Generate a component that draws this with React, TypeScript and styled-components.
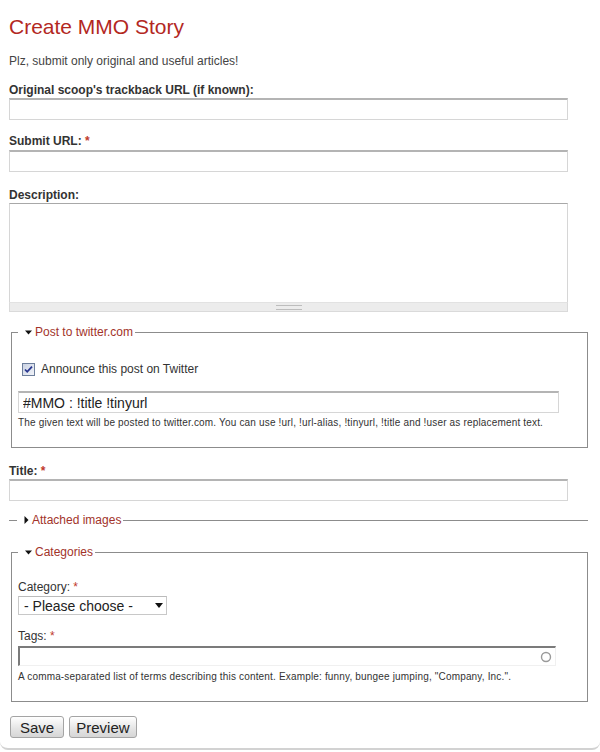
import React from 'react'
import styled, { createGlobalStyle } from 'styled-components'

const GlobalStyle = createGlobalStyle`
  body {
    margin: 0;
    background: #fff;
    font-family: "Liberation Sans", Arial, sans-serif;
    color: #333;
  }
`

const Page = styled.div`
  width: 600px;
  box-sizing: border-box;
  padding: 14px 32px 10px 9px;
  border-bottom: 2px solid #d2d2d2;
  border-radius: 0 0 8px 8px;
`

const Title = styled.h1`
  margin: 0;
  font-size: 21px;
  line-height: 26px;
  font-weight: normal;
  color: #b3281f;
`

const Intro = styled.p`
  margin: 13px 0 0;
  font-size: 12px;
  line-height: 16px;
  color: #444;
`

const FormItem = styled.div<{ $top: number }>`
  margin-top: ${p => p.$top}px;
`

const Label = styled.label<{ $gap?: number; $weight?: string }>`
  display: block;
  font-size: 12px;
  line-height: 16px;
  font-weight: ${p => (p.$weight === 'normal' ? 'normal' : 'bold')};
  color: #333;
  margin-bottom: ${p => p.$gap ?? 0}px;
`

const Required = styled.span`
  color: #c0392b;
`

const TextInput = styled.input<{ $width?: number; $size?: number }>`
  display: block;
  box-sizing: border-box;
  width: ${p => (p.$width ? `${p.$width}px` : '100%')};
  height: 22px;
  margin: 0;
  padding: 0 4px;
  border: 1px solid #d6d6d6;
  border-top: 2px solid #b4b4b4;
  font-family: inherit;
  font-size: ${p => p.$size ?? 12}px;
  color: #222;
  background: #fff;
  outline: none;
`

const TextAreaBox = styled.div`
  display: flex;
  flex-direction: column;
`

const TextArea = styled.textarea`
  display: block;
  box-sizing: border-box;
  width: 100%;
  height: 99px;
  margin: 0;
  border: 1px solid #d6d6d6;
  border-top: 1px solid #a8a8a8;
  border-bottom: none;
  resize: none;
  font-family: inherit;
  outline: none;
`

const Grippie = styled.div`
  height: 10px;
  box-sizing: border-box;
  background: #ececec;
  border: 1px solid #dadada;
  border-top-color: #e2e2e2;
  display: flex;
  align-items: center;
  justify-content: center;
`

const GrippieHandle = styled.span`
  width: 26px;
  height: 3px;
  border-top: 1px solid #bdbdbd;
  border-bottom: 1px solid #bdbdbd;
`

const Fieldset = styled.fieldset<{ $top: number; $collapsed?: boolean }>`
  margin: ${p => p.$top}px 0 0 2px;
  width: 577px;
  box-sizing: border-box;
  padding: 0 6px ${p => (p.$collapsed ? 0 : 18)}px;
  border: 1px solid #8c8c8c;
  ${p =>
    p.$collapsed &&
    `
    border-left: none;
    border-right: none;
    border-bottom: none;
    width: 579px;
    margin-left: 0;
    padding-left: 8px;
  `}
`

const Legend = styled.legend`
  padding: 0 2px 0 0;
  font-size: 12px;
  line-height: 16px;
  color: #a2332a;
`

const LegendInner = styled.span`
  display: flex;
  align-items: center;
  gap: 3px;
  padding-left: 7px;
`

const CheckRow = styled.label`
  display: flex;
  align-items: center;
  gap: 6px;
  margin-top: 21px;
  margin-left: 4px;
  font-size: 12px;
  line-height: 16px;
  color: #333;
`

const Help = styled.div<{ $top: number }>`
  margin-top: ${p => p.$top}px;
  font-size: 10px;
  line-height: 13px;
  color: #333;
  letter-spacing: 0.17px;
`

const SelectBox = styled.div`
  display: flex;
  align-items: center;
  width: 149px;
  height: 19px;
  box-sizing: border-box;
  border: 1px solid #c8c8c8;
  border-top-color: #bbb;
  background: #fff;
`

const Select = styled.select`
  flex: 1;
  min-width: 0;
  height: 100%;
  appearance: none;
  border: none;
  background: transparent;
  padding: 0 0 0 5px;
  font-family: inherit;
  font-size: 14px;
  color: #222;
  outline: none;
`

const TagsField = styled.div`
  display: flex;
  align-items: center;
  width: 538px;
  height: 20px;
  box-sizing: border-box;
  border-top: 2px solid #7b7b7b;
  border-left: 2px solid #7b7b7b;
  border-right: 1px solid #f0f0f0;
  border-bottom: 1px solid #f0f0f0;
`

const TagsInput = styled.input`
  flex: 1;
  min-width: 0;
  border: none;
  height: 100%;
  padding: 0 4px;
  font-family: inherit;
  outline: none;
  background: transparent;
`

const ButtonRow = styled.div`
  display: flex;
  gap: 5px;
  margin-top: 14px;
  margin-left: 1px;
`

const Button = styled.button<{ $pad: number }>`
  height: 22px;
  padding: 0 ${p => p.$pad}px;
  font-family: inherit;
  font-size: 15px;
  color: #222;
  border: 1px solid #a4a4a4;
  border-radius: 3px;
  background: linear-gradient(#ffffff, #e4e4e4 60%, #d6d6d6);
  cursor: pointer;
`

const TriangleDown = () => (
  <svg width="7" height="5" viewBox="0 0 7 5">
    <path d="M0 0.5 H7 L3.5 4.5 Z" fill="#111" />
  </svg>
)

const TriangleRight = () => (
  <svg width="5" height="8" viewBox="0 0 5 8">
    <path d="M0.5 0 V8 L4.5 4 Z" fill="#111" />
  </svg>
)

const CheckBox = () => (
  <svg width="13" height="13" viewBox="0 0 13 13">
    <defs>
      <linearGradient id="cb" x1="0" y1="0" x2="1" y2="1">
        <stop offset="0" stopColor="#c9d1e2" />
        <stop offset="1" stopColor="#f2f4f9" />
      </linearGradient>
    </defs>
    <rect x="0.5" y="0.5" width="12" height="12" fill="url(#cb)" stroke="#6d7f9c" />
    <path d="M3 6.5 L5.2 8.8 L10 3.6" fill="none" stroke="#28368f" strokeWidth="1.8" />
  </svg>
)

const SelectArrow = () => (
  <svg width="8" height="5" viewBox="0 0 8 5" style={{ marginRight: 3 }}>
    <path d="M0 0 H8 L4 5 Z" fill="#111" />
  </svg>
)

const Throbber = () => (
  <svg width="12" height="12" viewBox="0 0 12 12" style={{ marginRight: 3 }}>
    <circle cx="6" cy="6" r="4.5" fill="none" stroke="#9a9a9a" strokeWidth="1.4" />
  </svg>
)

const App: React.FC = () => {
  return (
    <Page>
      <GlobalStyle />
      <Title>Create MMO Story</Title>
      <Intro>Plz, submit only original and useful articles!</Intro>

      <FormItem $top={13}>
        <Label>Original scoop's trackback URL (if known):</Label>
        <TextInput type="text" />
      </FormItem>

      <FormItem $top={13}>
        <Label $gap={1}>
          Submit URL: <Required>*</Required>
        </Label>
        <TextInput type="text" />
      </FormItem>

      <FormItem $top={15}>
        <Label>Description:</Label>
        <TextAreaBox>
          <TextArea />
          <Grippie>
            <GrippieHandle />
          </Grippie>
        </TextAreaBox>
      </FormItem>

      <Fieldset $top={12}>
        <Legend>
          <LegendInner>
            <TriangleDown />
            Post to twitter.com
          </LegendInner>
        </Legend>
        <CheckRow>
          <CheckBox />
          Announce this post on Twitter
        </CheckRow>
        <FormItem $top={14}>
          <TextInput type="text" $width={541} $size={14} defaultValue="#MMO : !title !tinyurl" />
          <Help $top={3}>
            The given text will be posted to twitter.com. You can use !url, !url-alias, !tinyurl, !title and !user as replacement text.
          </Help>
        </FormItem>
      </Fieldset>

      <FormItem $top={15}>
        <Label>
          Title: <Required>*</Required>
        </Label>
        <TextInput type="text" />
      </FormItem>

      <Fieldset $top={11} $collapsed>
        <Legend>
          <LegendInner>
            <TriangleRight />
            Attached images
          </LegendInner>
        </Legend>
      </Fieldset>

      <Fieldset $top={16}>
        <Legend>
          <LegendInner>
            <TriangleDown />
            Categories
          </LegendInner>
        </Legend>
        <FormItem $top={19}>
          <Label $weight="normal" $gap={1}>
            Category: <Required>*</Required>
          </Label>
          <SelectBox>
            <Select defaultValue="">
              <option value="">- Please choose -</option>
            </Select>
            <SelectArrow />
          </SelectBox>
        </FormItem>
        <FormItem $top={13}>
          <Label $weight="normal" $gap={2}>
            Tags: <Required>*</Required>
          </Label>
          <TagsField>
            <TagsInput type="text" />
            <Throbber />
          </TagsField>
          <Help $top={4}>
            A comma-separated list of terms describing this content. Example: funny, bungee jumping, "Company, Inc.".
          </Help>
        </FormItem>
      </Fieldset>

      <ButtonRow>
        <Button type="button" $pad={9}>Save</Button>
        <Button type="button" $pad={6}>Preview</Button>
      </ButtonRow>
    </Page>
  )
}

export default App
